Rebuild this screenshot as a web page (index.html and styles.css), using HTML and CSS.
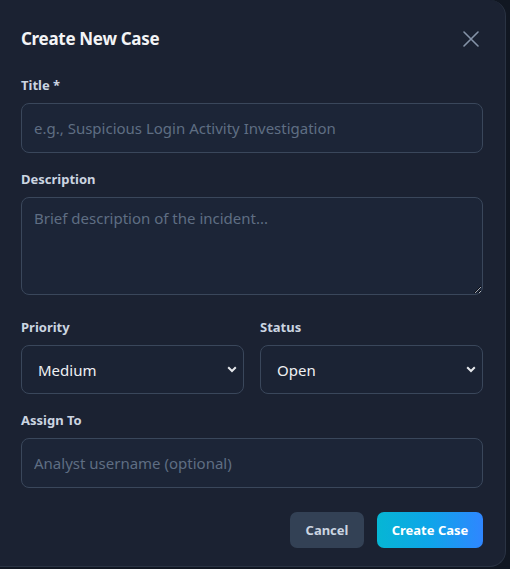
FILE: index.html
```html
<!DOCTYPE html>
<html lang="en">
<head>
<meta charset="utf-8">
<title>Create New Case</title>
<link rel="stylesheet" href="styles.css">
</head>
<body>
<div class="modal">
  <div class="header">
    <h2 class="title">Create New Case</h2>
    <button class="close" aria-label="Close">
      <svg width="16" height="16" viewBox="0 0 16 16"><path d="M1 1L15 15M15 1L1 15" stroke="#8593a8" stroke-width="1.6" fill="none" stroke-linecap="round"/></svg>
    </button>
  </div>
  <div class="field">
    <label class="label">Title *</label>
    <input class="input" type="text" placeholder="e.g., Suspicious Login Activity Investigation">
  </div>
  <div class="field">
    <label class="label">Description</label>
    <textarea class="input textarea" placeholder="Brief description of the incident..."></textarea>
  </div>
  <div class="row">
    <div class="field col">
      <label class="label">Priority</label>
      <select class="input select"><option>Medium</option></select>
    </div>
    <div class="field col">
      <label class="label">Status</label>
      <select class="input select"><option>Open</option></select>
    </div>
  </div>
  <div class="field">
    <label class="label">Assign To</label>
    <input class="input" type="text" placeholder="Analyst username (optional)">
  </div>
  <div class="actions">
    <button class="btn btn-cancel">Cancel</button>
    <button class="btn btn-primary">Create Case</button>
  </div>
</div>
</body>
</html>
```
FILE: styles.css
```css
* { box-sizing: border-box; }
html, body { margin: 0; padding: 0; }
body {
  background: #111722;
  width: 510px;
  height: 569px;
  overflow: hidden;
  font-family: "Segoe UI", "Noto Sans", "Liberation Sans", sans-serif;
}
.modal {
  width: 506px;
  height: 567px;
  background: #1b2232;
  border-right: 1px solid #2a3343;
  border-bottom: 1px solid #2a3343;
  border-radius: 0 16px 16px 0;
  padding: 25px 22px 0 21px;
}
.header {
  display: flex;
  align-items: center;
  justify-content: space-between;
  height: 28px;
  margin-bottom: 22px;
}
.title {
  margin: 0;
  font-size: 17px;
  letter-spacing: -0.3px;
  font-weight: 700;
  color: #f3f4f6;
  line-height: 28px;
}
.close {
  background: none;
  border: 0;
  padding: 0;
  margin-right: 4px;
  width: 16px;
  height: 16px;
  display: flex;
}
.field {
  display: flex;
  flex-direction: column;
  margin-bottom: 16px;
}
.label {
  font-size: 13px;
  font-weight: 700;
  color: #cbd5e1;
  line-height: 20px;
  margin-bottom: 8px;
}
.input {
  width: 100%;
  height: 50px;
  background: #1c2537;
  border: 1px solid #3a475b;
  border-radius: 8px;
  padding: 0 12px;
  font-family: inherit;
  font-size: 15px;
  color: #e5e7eb;
  outline: none;
}
.input::placeholder { color: #5f6e83; }
.textarea {
  height: 98px;
  padding: 10px 12px;
  resize: vertical;
  display: block;
  margin-bottom: 6px;
}
.row {
  display: flex;
  gap: 16px;
}
.col { flex: 1; min-width: 0; }
.select {
  height: 49px;
  appearance: none;
  -webkit-appearance: none;
  padding: 0 16px;
  font-size: 15px;
  color: #eef0f3;
  background-color: #1b2334;
  background-image: url("data:image/svg+xml;utf8,<svg xmlns='http://www.w3.org/2000/svg' width='10' height='7' viewBox='0 0 10 7'><path d='M1.2 1.3L5 5L8.8 1.3' stroke='%23e5e7eb' stroke-width='2' fill='none'/></svg>");
  background-repeat: no-repeat;
  background-position: right 6px center;
}
.actions {
  display: flex;
  justify-content: flex-end;
  gap: 13px;
  margin-top: 24px;
}
.btn {
  height: 36px;
  border: 0;
  border-radius: 7px;
  font-family: inherit;
  font-size: 13px;
  font-weight: 700;
  padding: 0;
  white-space: nowrap;
}
.btn-cancel {
  width: 74px;
  background: #334155;
  color: #cbd5e1;
}
.btn-primary {
  width: 106px;
  background: linear-gradient(90deg, #06b6d4, #0ea5e9 50%, #2f86ff);
  color: #ffffff;
}
```
